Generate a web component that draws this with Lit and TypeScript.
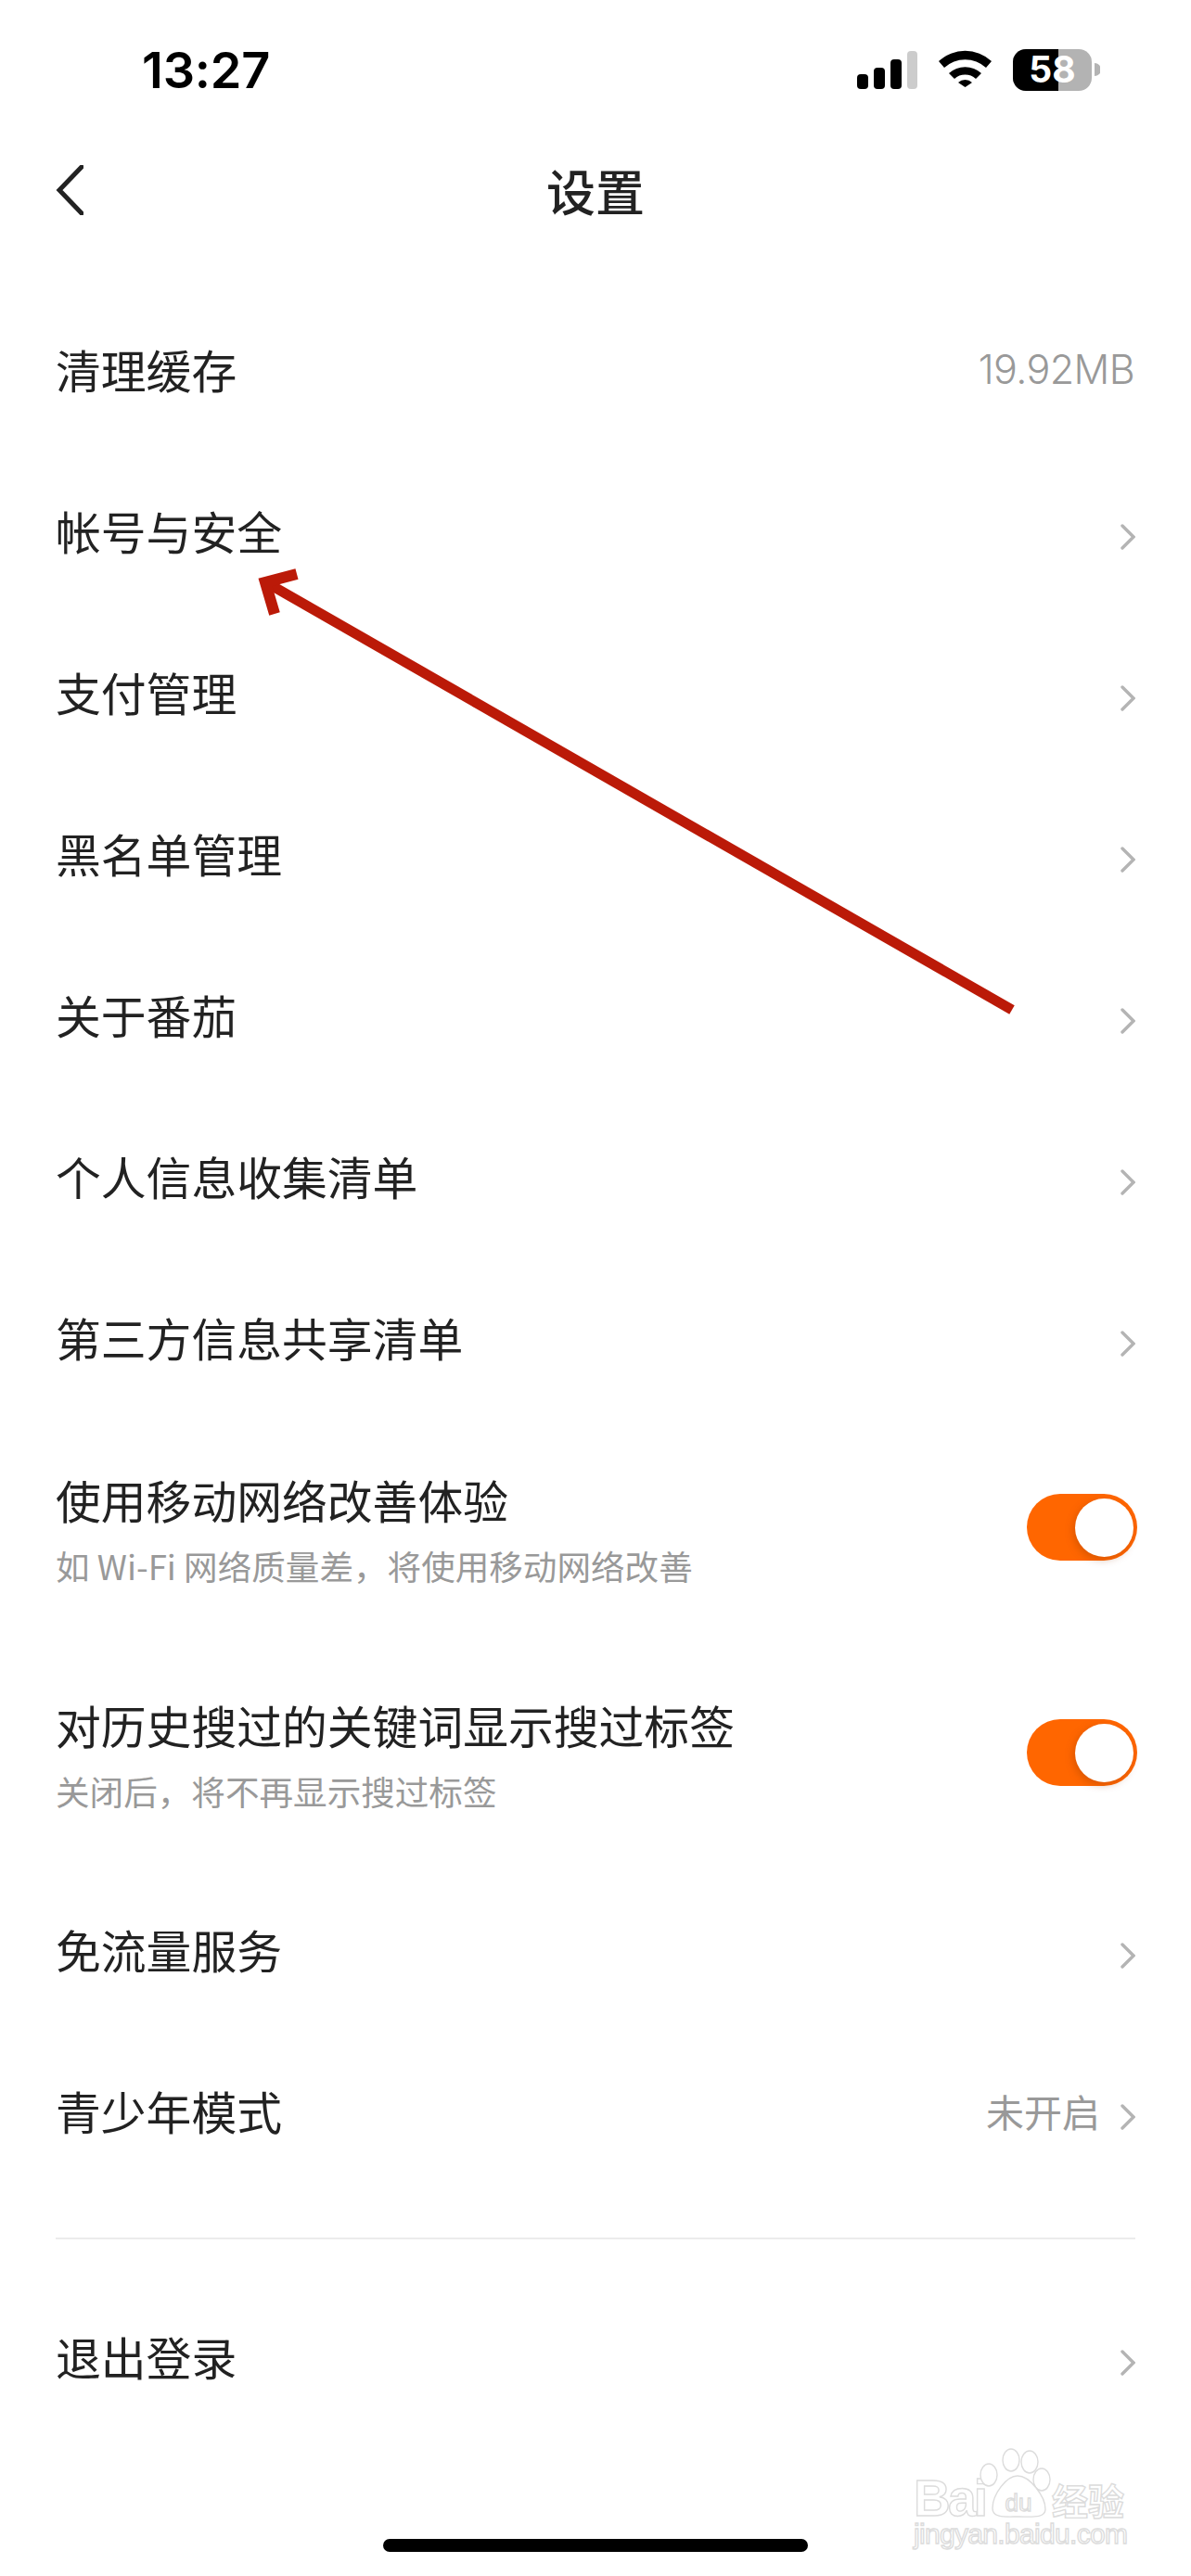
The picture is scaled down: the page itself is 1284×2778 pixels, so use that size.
import { LitElement, html, css, svg } from "lit";
import { customElement } from "lit/decorators.js";

const chevron = html`<svg class="chev" viewBox="0 0 16 28" width="16" height="28"><path d="M2 2 L14 14 L2 26" fill="none" stroke="#b4b4b4" stroke-width="3.4" stroke-linecap="round" stroke-linejoin="miter"/></svg>`;

@customElement("app-root")
export class AppRoot extends LitElement {
  static styles = css`
    :host { display: block; width: 1284px; height: 2778px; position: relative; background: #fff; overflow: hidden; font-family: "Noto Sans CJK SC", "Inter", sans-serif; color: #222; }
    .status { height: 152px; box-sizing: border-box; display: flex; justify-content: space-between; align-items: flex-start; padding: 33px 98px 0 153px; }
    .time { font-family: "Inter", sans-serif; font-weight: 600; font-size: 54px; line-height: 46px; color: #000; letter-spacing: -0.2px; margin-top: 20px; }
    .nav { height: 110px; display: grid; grid-template-columns: 1fr auto 1fr; align-items: center; padding: 0 60px 4px; box-sizing: border-box; }
    .nav svg { display: block; }
    .title { font-size: 53px; font-weight: 500; line-height: 60px; color: #222; }
    .list { margin-top: 51px; display: flex; flex-direction: column; }
    .row { height: 174px; display: flex; align-items: center; justify-content: space-between; padding: 0 60px; }
    .label { font-size: 48.8px; line-height: 56px; position: relative; top: -2px; }
    .right { display: flex; align-items: center; gap: 22px; }
    .val { font-size: 41px; line-height: 50px; color: #999; position: relative; top: -2px; }
    .num { font-family: "Inter", sans-serif; font-weight: 300; font-size: 43px; letter-spacing: -0.6px; margin-right: 1px; }
    .chev { display: block; margin-top: 10px; }
    .trow { height: 232px; margin-bottom: 11px; display: flex; align-items: flex-start; justify-content: space-between; padding: 0 60px; }
    .ttext { padding-top: 60px; }
    .sub { font-size: 36.6px; line-height: 44px; margin-top: 22px; color: #999; position: relative; top: -2px; }
    .switch { margin-top: 80px; width: 119px; height: 72px; border-radius: 36px; background: #ff6600; position: relative; margin-right: -2px; }
    .knob { position: absolute; right: 4px; top: 5px; width: 63px; height: 63px; border-radius: 50%; background: #fff; box-shadow: -2px 3px 8px rgba(150, 60, 0, 0.35); }
    .divider { height: 2px; background: #ececec; margin: 48px 60px 41px; }
    .home { position: absolute; left: 413px; top: 2738px; width: 458px; height: 14px; border-radius: 7px; background: #000; }
    .overlay { position: absolute; left: 0; top: 0; pointer-events: none; }
  `;

  private row(label: string, value?: string, chev = true, num = false) {
    return html`<div class="row">
      <span class="label">${label}</span>
      <span class="right">
        ${value ? html`<span class="val ${num ? "num" : ""}">${value}</span>` : ""}
        ${chev ? chevron : ""}
      </span>
    </div>`;
  }

  private toggle(label: string, sub: string) {
    return html`<div class="trow">
      <div class="ttext"><div class="label">${label}</div><div class="sub">${sub}</div></div>
      <div class="switch"><div class="knob"></div></div>
    </div>`;
  }

  render() {
    return html`
      <div class="status">
        <span class="time">13:27</span>
        <svg width="262" height="86" viewBox="925 33 262 86">
          <rect x="925" y="80" width="12" height="16" rx="4" fill="#000"/>
          <rect x="943" y="73" width="12" height="23" rx="4" fill="#000"/>
          <rect x="961" y="64" width="12" height="32" rx="4" fill="#000"/>
          <rect x="979" y="55" width="11" height="41" rx="4" fill="#ccc"/>
          <path d="M1013 68 A42 42 0 0 1 1070 68 L1064 75 A33 33 0 0 0 1019 75 Z M1024 81 A26 26 0 0 1 1059 81 L1053 87 A17 17 0 0 0 1030 87 Z M1034 91 A11 11 0 0 1 1049 91 L1041.5 96 Z" fill="#000" transform="translate(0 -2)"/>
          <rect x="1093" y="53" width="85" height="45" rx="14" fill="#b3b3b3"/>
          <path d="M1107 53 H1142 V98 H1107 A14 14 0 0 1 1093 84 V67 A14 14 0 0 1 1107 53 Z" fill="#000"/>
          <path d="M1181 68 A7 7 0 0 1 1181 82 Z" fill="#b3b3b3"/>
          <text x="1135.5" y="89" text-anchor="middle" font-family="Inter, sans-serif" font-weight="700" font-size="39" fill="#fff">58</text>
        </svg>
      </div>
      <div class="nav">
        <svg width="30" height="54" viewBox="0 0 30 54"><path d="M28 2 L4 27 L28 52" fill="none" stroke="#222" stroke-width="5" stroke-linecap="round" stroke-linejoin="miter"/></svg>
        <span class="title">设置</span>
        <span></span>
      </div>
      <div class="list">
        ${this.row("清理缓存", "19.92MB", false, true)}
        ${this.row("帐号与安全")}
        ${this.row("支付管理")}
        ${this.row("黑名单管理")}
        ${this.row("关于番茄")}
        ${this.row("个人信息收集清单")}
        ${this.row("第三方信息共享清单")}
        ${this.toggle("使用移动网络改善体验", "如 Wi-Fi 网络质量差，将使用移动网络改善")}
        ${this.toggle("对历史搜过的关键词显示搜过标签", "关闭后，将不再显示搜过标签")}
        ${this.row("免流量服务")}
        ${this.row("青少年模式", "未开启")}
        <div class="divider"></div>
        ${this.row("退出登录")}
      </div>
      <div class="home"></div>
      <svg class="overlay" width="1284" height="2778" viewBox="0 0 1284 2778">
        <path d="M1091 1089 L292 631" stroke="#bb1a08" stroke-width="11" fill="none"/>
        <path d="M320 619 L286 628 L296 662" stroke="#bb1a08" stroke-width="12" fill="none" stroke-linejoin="miter"/>
        ${svg`<g fill="#fff" stroke="#dcdcdc" stroke-width="1.4">
          <text x="985" y="2713" font-family="Liberation Sans, sans-serif" font-weight="700" font-size="55" textLength="80">Bai</text>
          <ellipse cx="1066" cy="2669" rx="9" ry="12"/>
          <ellipse cx="1090" cy="2653" rx="9" ry="12"/>
          <ellipse cx="1110" cy="2655" rx="9" ry="12"/>
          <ellipse cx="1123" cy="2674" rx="9" ry="12"/>
          <path d="M1070 2705 C1070 2690 1085 2670 1097 2670 C1110 2670 1127 2692 1127 2706 C1127 2716 1112 2714 1098 2714 C1085 2714 1070 2716 1070 2705 Z"/>
          <text x="1098" y="2708" text-anchor="middle" font-family="Liberation Sans, sans-serif" font-size="26">du</text>
          <text x="1134" y="2712" font-family="Noto Sans CJK SC, sans-serif" font-weight="700" font-size="39">经验</text>
          <text x="985" y="2743" font-family="Liberation Sans, sans-serif" font-size="30" textLength="231">jingyan.baidu.com</text>
        </g>`}
      </svg>
    `;
  }
}
